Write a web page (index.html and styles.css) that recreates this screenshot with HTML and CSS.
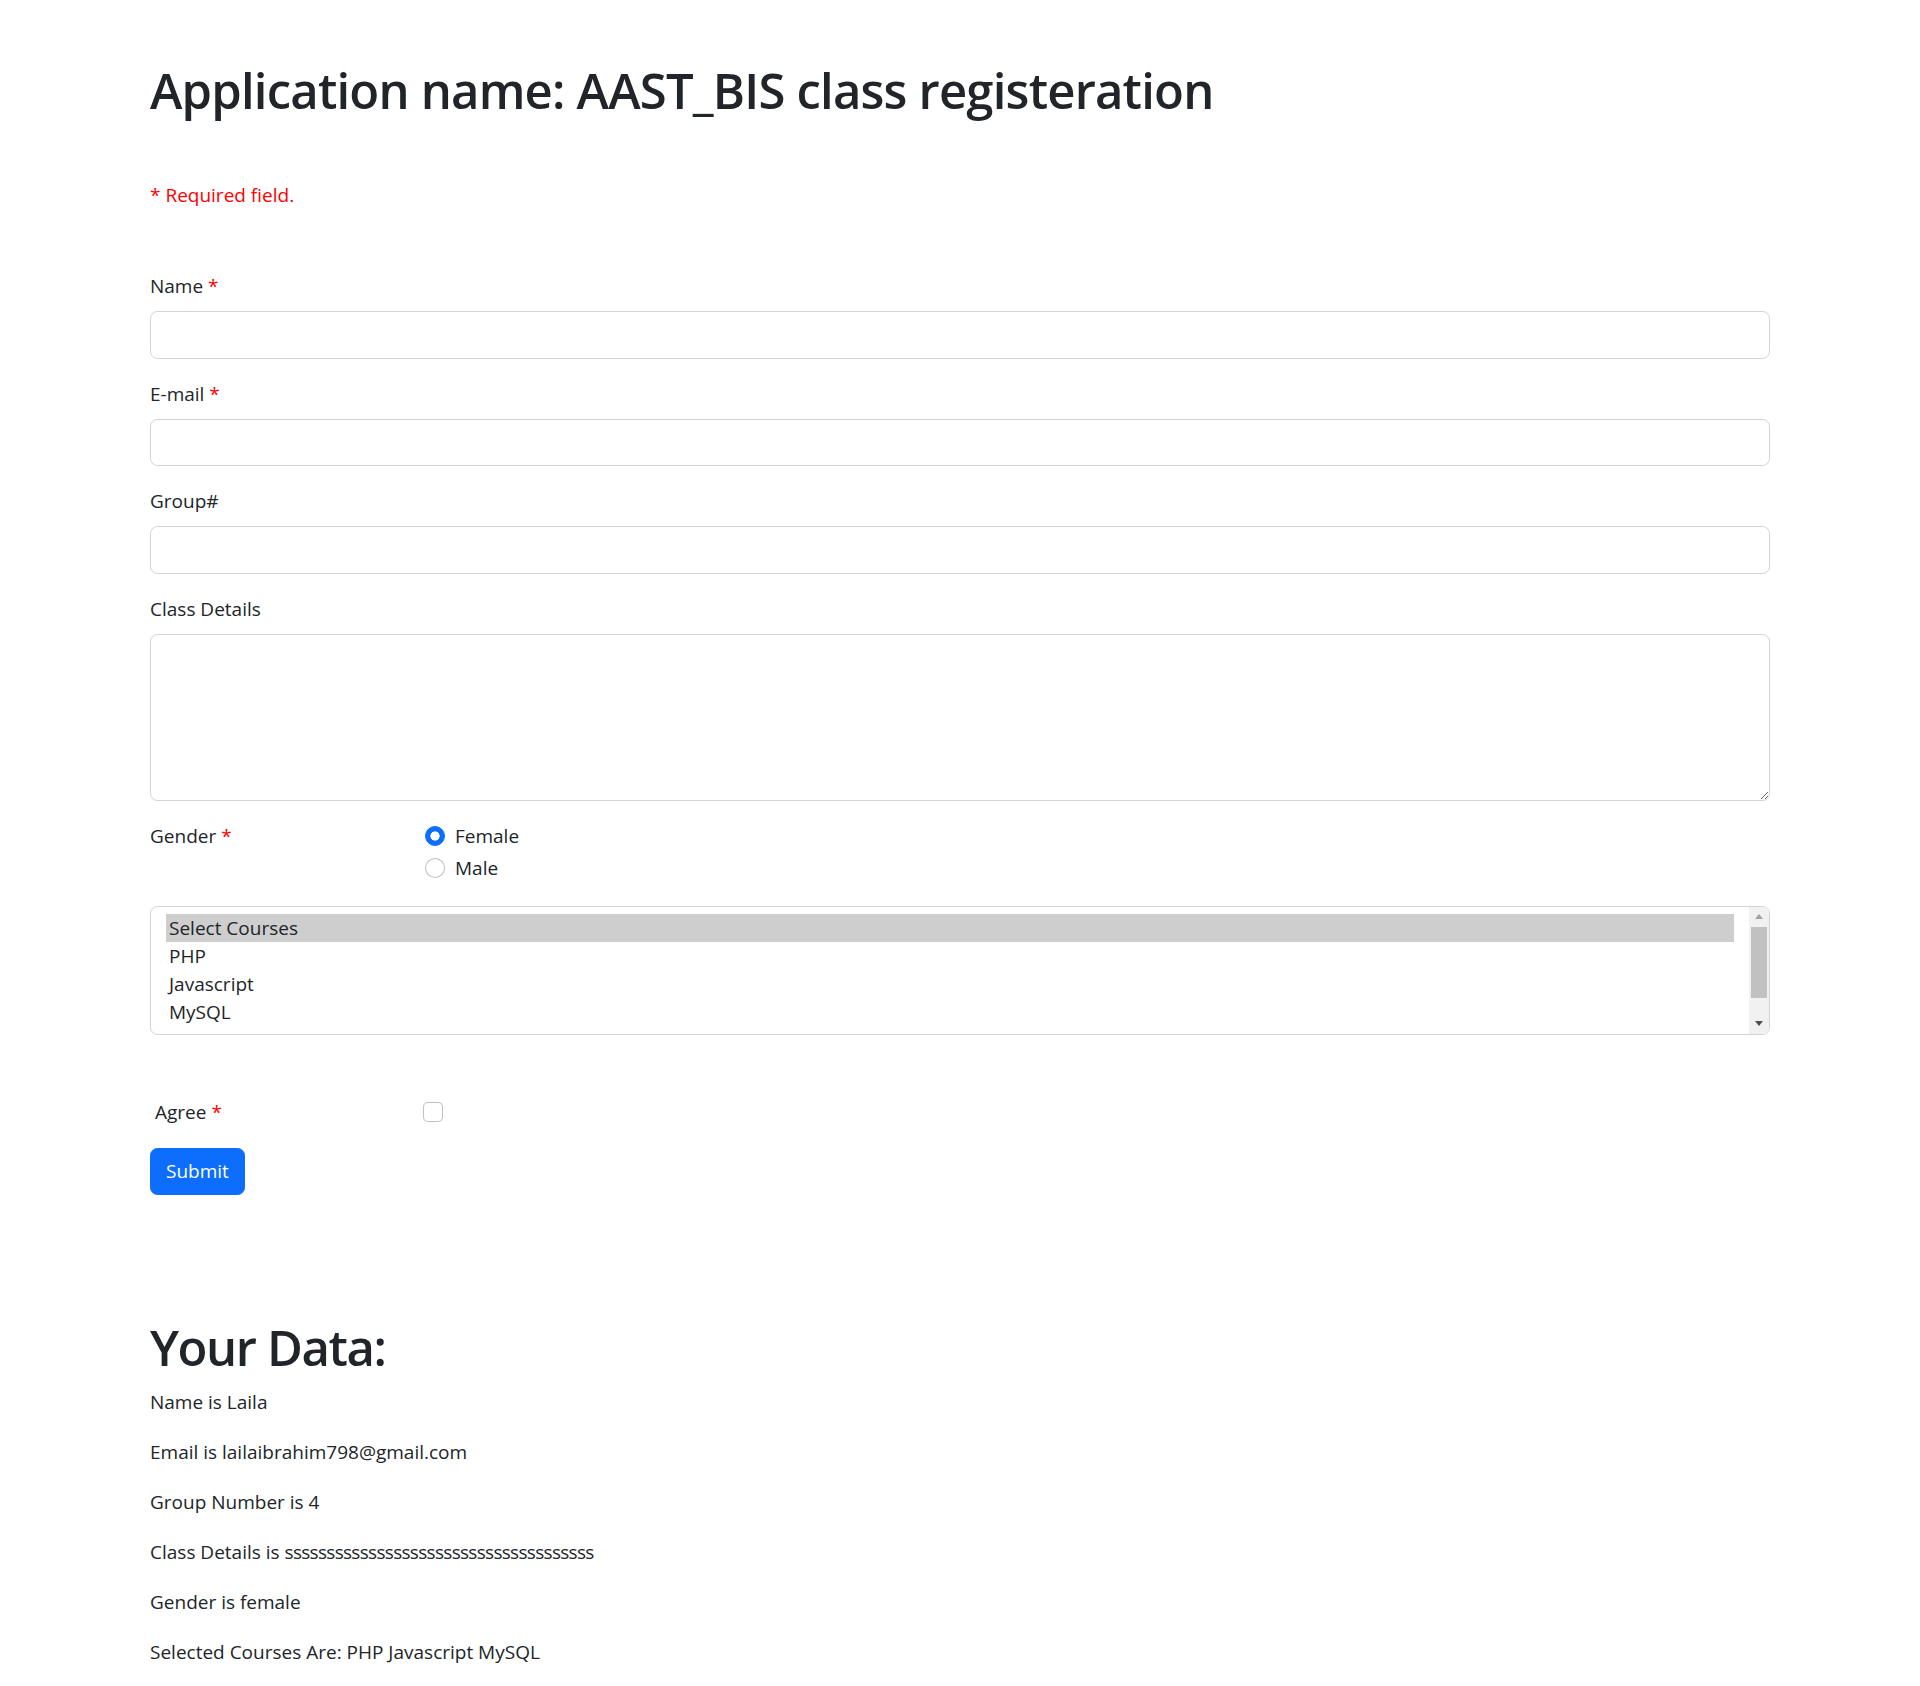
FILE: index.html
```html
<!DOCTYPE html>
<html lang="en">
<head>
<meta charset="utf-8">
<title>AAST_BIS class registeration</title>
<link rel="stylesheet" href="styles.css">
</head>
<body>
<main class="container">
  <h1 class="title">Application name: AAST_BIS class registeration</h1>
  <p class="required-note"><span class="error">* Required field.</span></p>

  <form class="reg-form">
    <div class="field">
      <label class="form-label" for="name">Name <span class="error">*</span></label>
      <input class="form-control" type="text" id="name" name="name">
    </div>
    <div class="field">
      <label class="form-label" for="email">E-mail <span class="error">*</span></label>
      <input class="form-control" type="text" id="email" name="email">
    </div>
    <div class="field">
      <label class="form-label" for="group">Group#</label>
      <input class="form-control" type="text" id="group" name="group">
    </div>
    <div class="field">
      <label class="form-label" for="details">Class Details</label>
      <textarea class="form-control textarea" id="details" name="details" rows="5"></textarea>
    </div>

    <div class="field row-grid">
      <span class="row-label">Gender <span class="error">*</span></span>
      <div class="radios">
        <label class="form-check">
          <input class="radio" type="radio" name="gender" value="female" checked>
          <span>Female</span>
        </label>
        <label class="form-check">
          <input class="radio" type="radio" name="gender" value="male">
          <span>Male</span>
        </label>
      </div>
    </div>

    <div class="listbox" role="listbox" aria-multiselectable="true">
      <div class="listbox-options">
        <div class="opt selected" role="option">Select Courses</div>
        <div class="opt" role="option">PHP</div>
        <div class="opt" role="option">Javascript</div>
        <div class="opt" role="option">MySQL</div>
      </div>
      <div class="scrollbar">
        <div class="sb-btn"><span class="arrow-up"></span></div>
        <div class="sb-track"><div class="sb-thumb"></div></div>
        <div class="sb-btn"><span class="arrow-down"></span></div>
      </div>
    </div>

    <div class="row-grid agree-row">
      <label class="row-label agree-label" for="agree">Agree <span class="error">*</span></label>
      <div><input class="checkbox" type="checkbox" id="agree" name="agree"></div>
    </div>

    <button class="btn-submit" type="submit">Submit</button>
  </form>

  <section class="results">
    <h1 class="results-title">Your Data:</h1>
    <p>Name is Laila</p>
    <p>Email is lailaibrahim798@gmail.com</p>
    <p>Group Number is 4</p>
    <p>Class Details is <span class="tight">sssssssssssssssssssssssssssssssssssss</span></p>
    <p>Gender is female</p>
    <p>Selected Courses Are: PHP Javascript MySQL</p>
  </section>
</main>
</body>
</html>
```

FILE: styles.css
```css
* {
  box-sizing: border-box;
}

html, body {
  margin: 0;
  padding: 0;
  background: #fff;
}

body {
  font-family: "Open Sans", "Noto Sans", "Liberation Sans", sans-serif;
  font-size: 19px;
  line-height: 30px;
  color: #212529;
}

.container {
  width: 1620px;
  margin: 0 auto;
  padding-top: 60px;
}

.title {
  margin: 0;
  font-size: 49px;
  line-height: 60px;
  font-weight: 600;
  letter-spacing: -0.8px;
  color: #212529;
}

.required-note {
  margin: 60px 0 0;
}

.error {
  color: #ff0000;
}

.reg-form {
  margin-top: 61px;
}

.field {
  margin-bottom: 20px;
}

.form-label {
  display: block;
  margin-bottom: 10px;
}

.form-control {
  display: block;
  width: 100%;
  height: 47.5px;
  padding: 7.5px 15px;
  font: inherit;
  color: #212529;
  background: #fff;
  border: 1px solid #ced4da;
  border-radius: 7.5px;
  outline: none;
}

.textarea {
  height: 167px;
  resize: vertical;
}

.row-grid {
  display: grid;
  grid-template-columns: 275px 1fr;
}

.radios {
  display: flex;
  flex-direction: column;
}

.form-check {
  display: flex;
  align-items: flex-start;
  min-height: 30px;
  margin-bottom: 2.5px;
}

.form-check span {
  margin-left: 10px;
}

.radio {
  appearance: none;
  -webkit-appearance: none;
  width: 20px;
  height: 20px;
  margin: 5px 0 0;
  border: 1px solid rgba(0, 0, 0, 0.25);
  border-radius: 50%;
  background: #fff;
  flex: none;
}

.radio:checked {
  border-color: #0d6efd;
  background: radial-gradient(circle, #fff 0 4.3px, #0d6efd 4.9px);
}

.listbox {
  display: flex;
  height: 129px;
  border: 1px solid #ced4da;
  border-radius: 7.5px;
  overflow: hidden;
  background: #fff;
}

.listbox-options {
  flex: 1;
  padding: 7px 15px;
}

.opt {
  height: 28px;
  line-height: 28px;
  padding: 0 3px;
  white-space: nowrap;
}

.opt.selected {
  background: #cecece;
}

.scrollbar {
  width: 20px;
  flex: none;
  display: flex;
  flex-direction: column;
  background: #f1f1f1;
}

.sb-btn {
  height: 20px;
  flex: none;
  display: flex;
  align-items: center;
  justify-content: center;
}

.arrow-up {
  width: 0;
  height: 0;
  border-left: 4.5px solid transparent;
  border-right: 4.5px solid transparent;
  border-bottom: 5px solid #a3a3a3;
}

.arrow-down {
  width: 0;
  height: 0;
  border-left: 4.5px solid transparent;
  border-right: 4.5px solid transparent;
  border-top: 5px solid #505050;
}

.sb-track {
  flex: 1;
  padding: 0 2px;
}

.sb-thumb {
  height: 71px;
  background: #c1c1c1;
}

.agree-row {
  margin-top: 62px;
  margin-bottom: 21px;
  align-items: center;
}

.agree-label {
  padding-left: 5px;
}

.checkbox {
  appearance: none;
  -webkit-appearance: none;
  display: block;
  width: 20px;
  height: 20px;
  margin: 0 0 0 -2px;
  border: 1px solid rgba(0, 0, 0, 0.25);
  border-radius: 5px;
  background: #fff;
}

.btn-submit {
  display: inline-block;
  height: 47.5px;
  padding: 7.5px 15px;
  font: inherit;
  line-height: 30px;
  color: #fff;
  background: #0d6efd;
  border: 1px solid #0d6efd;
  border-radius: 7.5px;
  cursor: pointer;
}

.results {
  margin-top: 122px;
}

.results-title {
  margin: 0 0 10px;
  font-size: 49px;
  line-height: 60px;
  font-weight: 600;
  letter-spacing: -1.4px;
}

.results p {
  margin: 0 0 20px;
}

.tight {
  letter-spacing: -0.7px;
}
```
